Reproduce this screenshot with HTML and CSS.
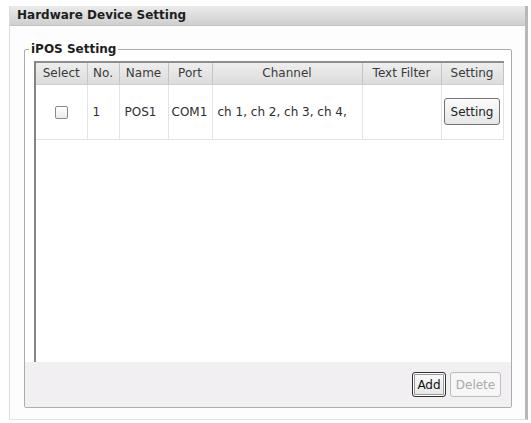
FILE: index.html
```html
<!DOCTYPE html>
<html lang="en">
<head>
  <meta charset="UTF-8">
  <title>Hardware Device Setting</title>
  <link rel="stylesheet" href="styles.css">
</head>
<body>
  <div class="window">
    <div class="title-bar">Hardware Device Setting</div>

    <fieldset class="group">
      <legend>iPOS Setting</legend>

      <div class="grid-wrap">
        <table class="grid">
          <colgroup>
            <col class="col-select">
            <col class="col-no">
            <col class="col-name">
            <col class="col-port">
            <col class="col-channel">
            <col class="col-filter">
            <col class="col-setting">
          </colgroup>
          <thead>
            <tr>
              <th>Select</th>
              <th>No.</th>
              <th>Name</th>
              <th>Port</th>
              <th>Channel</th>
              <th>Text Filter</th>
              <th>Setting</th>
            </tr>
          </thead>
          <tbody>
            <tr>
              <td class="cell-center"><span class="check"></span></td>
              <td>1</td>
              <td>POS1</td>
              <td class="cell-tight">COM1</td>
              <td>ch 1, ch 2, ch 3, ch 4,</td>
              <td></td>
              <td class="cell-center"><button class="btn btn-row">Setting</button></td>
            </tr>
          </tbody>
        </table>
      </div>

      <div class="actions">
        <button class="btn btn-focus">Add</button>
        <button class="btn btn-disabled" disabled>Delete</button>
      </div>
    </fieldset>
  </div>
</body>
</html>
```

FILE: styles.css
```css
* {
  box-sizing: border-box;
}

body {
  margin: 0;
  background: #ffffff;
  font-family: "DejaVu Sans", "Liberation Sans", sans-serif;
  color: #2e2e2e;
}

/* Outer window */
.window {
  margin: 6px 3px 0 9px;
  height: 414px;
  background: #fdfdfd;
  border-left: 1px solid #dcdcdc;
  border-right: 3px solid #b8b8b8;
  border-bottom: 1px solid #e2e2e2;
  display: flex;
  flex-direction: column;
}

.title-bar {
  height: 20px;
  line-height: 19px;
  padding-left: 7px;
  font-size: 12px;
  font-weight: bold;
  color: #1e1e1e;
  background: linear-gradient(#ebebeb, #cfcfcf);
  border-bottom: 1px solid #c2c2c2;
}

/* Group box */
.group {
  margin: 16px 13px 0 14px;
  padding: 0;
  border: 1px solid #acacac;
  border-radius: 2px;
  background: #ffffff;
  min-width: 0;
}

.group legend {
  margin-left: 4px;
  padding: 0 2px;
  font-size: 12px;
  line-height: 14px;
  font-weight: bold;
  color: #1e1e1e;
}

.grid-wrap {
  margin: 5px 3px 0 9px;
  height: 301px;
  background: #ffffff;
  border-left: 2px solid #858585;
}

/* Device table */
.grid {
  width: 467px;
  border-collapse: collapse;
  table-layout: fixed;
  font-size: 12px;
}

.col-select { width: 51px; }
.col-no { width: 32px; }
.col-name { width: 49px; }
.col-port { width: 44px; }
.col-channel { width: 150px; }
.col-filter { width: 79px; }
.col-setting { width: 62px; }

.grid th {
  height: 22px;
  padding: 0;
  font-weight: normal;
  color: #3a3a3a;
  text-align: center;
  background: linear-gradient(#eeeeee, #dcdcdc);
  border-top: 2px solid #8e8e8e;
  border-right: 1px solid #c4c4c4;
  border-bottom: 1px solid #cfcfcf;
}

.grid td {
  height: 55px;
  padding: 0 5px;
  white-space: nowrap;
  color: #2e2e2e;
  border-right: 1px solid #e3e3e3;
  border-bottom: 1px solid #e3e3e3;
}

.grid td.cell-center {
  text-align: center;
  padding: 0;
}

.grid td.cell-tight {
  padding: 0 3px;
}

.check {
  display: inline-block;
  width: 13px;
  height: 13px;
  vertical-align: middle;
  border: 1px solid #8a8a8a;
  border-radius: 2px;
  background: linear-gradient(#ffffff, #ececec);
}

/* Buttons */
.btn {
  height: 25px;
  padding: 0;
  font-family: inherit;
  font-size: 12px;
  color: #1a1a1a;
  border: 1px solid #7a7a7a;
  border-radius: 3px;
  background: linear-gradient(#fbfbfb, #e6e6e6);
  cursor: pointer;
}

.btn-row {
  width: 56px;
  height: 27px;
  color: #222;
  border-color: #737373;
}

.btn-focus {
  width: 34px;
  border: 1px solid #303030;
  box-shadow: inset 0 0 0 1px #ffffff, inset 0 0 0 2px #9a9a9a;
  color: #111;
}

.btn-disabled {
  width: 51px;
  color: #ababab;
  border-color: #bdbdbd;
  background: #f6f6f6;
  cursor: default;
}

.actions {
  height: 45px;
  padding-right: 10px;
  display: flex;
  justify-content: flex-end;
  align-items: center;
  gap: 4px;
  background: #f1eff2;
}
```
